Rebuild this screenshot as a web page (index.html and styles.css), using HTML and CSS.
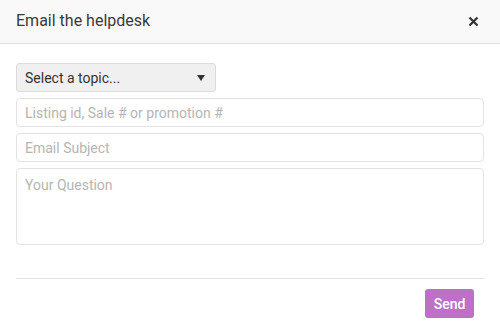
FILE: index.html
```html
<!DOCTYPE html>
<html lang="en">
<head>
  <meta charset="UTF-8" />
  <title>Email the helpdesk</title>
  <link rel="stylesheet" href="styles.css">
</head>
<body>
  <div class="modal">
    <div class="modal-header">
      <h3>Email the helpdesk</h3>
      <button class="close-btn" aria-label="Close">
        <svg width="11" height="11" viewBox="0 0 11 11">
          <path d="M1.5 1.5 L9.5 9.5 M9.5 1.5 L1.5 9.5" stroke="#333" stroke-width="2.2" stroke-linecap="butt"/>
        </svg>
      </button>
    </div>

    <form class="modal-body">
      <div class="select-box">
        <span>Select a topic...</span>
        <span class="caret"></span>
      </div>
      <input type="text" placeholder="Listing id, Sale # or promotion #" />
      <input type="text" placeholder="Email Subject" />
      <textarea placeholder="Your Question"></textarea>
    </form>

    <div class="modal-footer">
      <button type="button" class="send-btn">Send</button>
    </div>
  </div>
</body>
</html>
```

FILE: styles.css
```css
body {
  margin: 0;
  font-family: Roboto, 'Liberation Sans', sans-serif;
  background-color: white;
  color: #333;
}
.modal {
  width: 500px;
}
.modal-header {
  height: 43px;
  background-color: #f9f9f9;
  border-bottom: 1px solid #e3e3e3;
  display: flex;
  align-items: center;
  justify-content: space-between;
  padding: 0 21px 0 16px;
}
.modal-header h3 {
  margin: 0;
  font-size: 16px;
  font-weight: 400;
  color: #3a3a3a;
  position: relative;
  top: -1px;
}
.close-btn {
  background: none;
  border: none;
  padding: 0;
  width: 11px;
  height: 11px;
  display: flex;
  cursor: pointer;
}
.modal-body {
  padding: 19px 16px 0 16px;
  display: flex;
  flex-direction: column;
  gap: 6px;
}
.select-box {
  width: 200px;
  height: 29px;
  box-sizing: border-box;
  background-color: #f0f0f0;
  border: 1px solid #dcdcdc;
  border-radius: 3px;
  display: flex;
  align-items: center;
  justify-content: space-between;
  padding: 0 10px 0 8px;
  font-size: 14px;
  color: #333;
}
.caret {
  width: 0;
  height: 0;
  border-left: 4px solid transparent;
  border-right: 4px solid transparent;
  border-top: 6px solid #333;
  margin-top: 1px;
}
input, textarea {
  font-family: Roboto, 'Liberation Sans', sans-serif;
  font-size: 14px;
  color: #333;
  box-sizing: border-box;
  width: 100%;
  border: 1px solid #e3e3e3;
  border-radius: 4px;
  padding: 0 8px;
  margin: 0;
  outline: none;
}
input {
  height: 29px;
}
textarea {
  height: 77px;
  padding-top: 8px;
  resize: none;
}
::placeholder {
  color: #b5b5b5;
}
.modal-footer {
  margin: 33px 16px 0 16px;
  border-top: 1px solid #e3e3e3;
  display: flex;
  justify-content: flex-end;
  padding: 10px 10px 0 0;
}
.send-btn {
  background-color: #c06fc9;
  color: white;
  border: none;
  border-radius: 3px;
  height: 29px;
  width: 49px;
  font-family: Roboto, 'Liberation Sans', sans-serif;
  font-size: 14px;
  font-weight: 500;
  cursor: pointer;
}
```
